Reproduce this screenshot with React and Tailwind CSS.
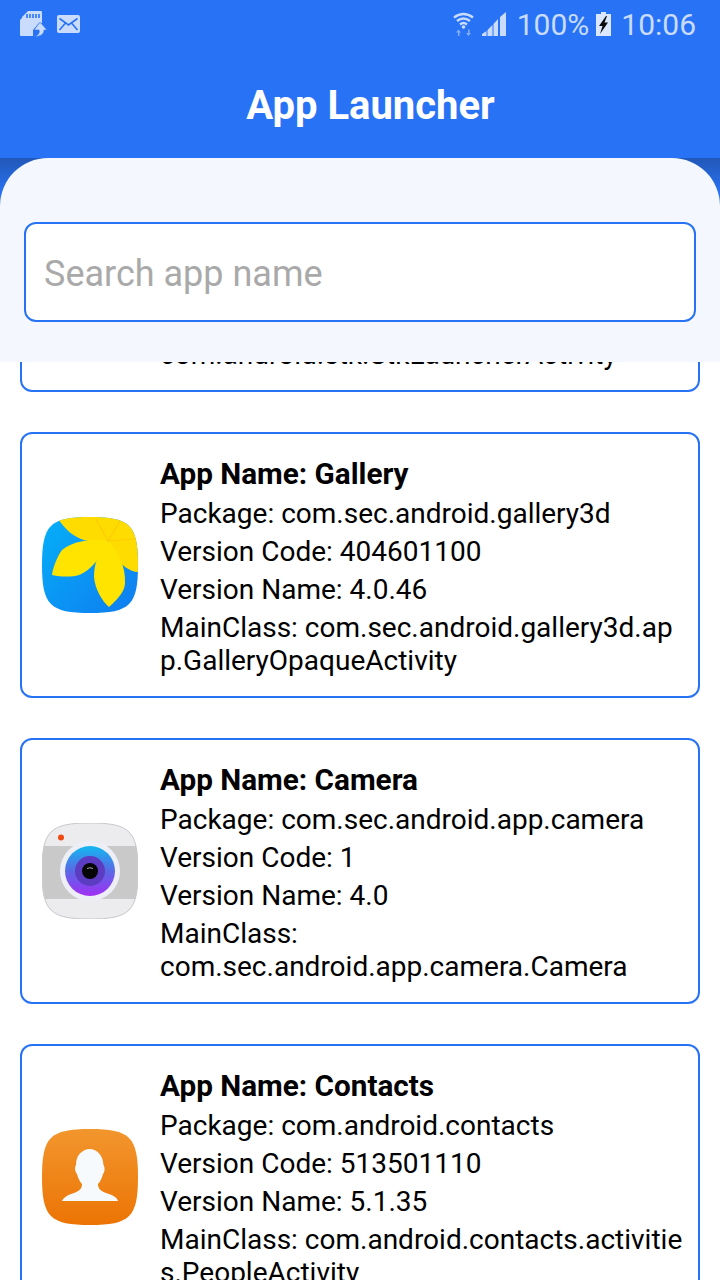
const apps = [
  {
    name: "Gallery",
    pkg: "com.sec.android.gallery3d",
    code: "404601100",
    version: "4.0.46",
    main: "com.sec.android.gallery3d.app.GalleryOpaqueActivity",
    wrap: "break-all",
    icon: <GalleryIcon />,
  },
  {
    name: "Camera",
    pkg: "com.sec.android.app.camera",
    code: "1",
    version: "4.0",
    main: "com.sec.android.app.camera.Camera",
    wrap: "break-normal",
    icon: <CameraIcon />,
  },
  {
    name: "Contacts",
    pkg: "com.android.contacts",
    code: "513501110",
    version: "5.1.35",
    main: "com.android.contacts.activities.PeopleActivity",
    wrap: "break-all",
    icon: <ContactsIcon />,
  },
];

const SQUIRCLE = "M48 0C88 0 96 8 96 48C96 88 88 96 48 96C8 96 0 88 0 48C0 8 8 0 48 0Z";

function GalleryIcon() {
  return (
    <svg viewBox="0 0 96 96" className="w-24 h-24 shrink-0 mb-1">
      <defs>
        <linearGradient id="gal" x1="0" y1="0" x2="1" y2="1">
          <stop offset="0" stopColor="#05b0f8" />
          <stop offset="1" stopColor="#0f7cf0" />
        </linearGradient>
        <clipPath id="galClip">
          <path d={SQUIRCLE} />
        </clipPath>
      </defs>
      <path d={SQUIRCLE} fill="url(#gal)" />
      <g clipPath="url(#galClip)">
        <path d="M15 0H96V55C88 55 79 48 74 40L66 24C56 25 46 25 39 22C29 18 21 10 15 0Z" fill="#ffdc00" />
        <path d="M66 24C50 21 30 24 20 33C15 40 11 50 10 58C20 60 30 60 37 58C48 54 60 40 66 24Z" fill="#ffe400" />
        <path d="M66 24C56 34 52 48 52 60C53 72 60 84 67 90C76 82 83 74 83 66C84 50 76 34 66 24Z" fill="#ffe400" />
        <path d="M66 24L54 2M66 24L78 4M66 24L94 22" stroke="#fccb00" strokeWidth="1.2" fill="none" />
      </g>
    </svg>
  );
}

function CameraIcon() {
  return (
    <svg viewBox="0 0 96 96" className="w-24 h-24 shrink-0 mb-1">
      <defs>
        <linearGradient id="lens" x1="0" y1="0" x2="0" y2="1">
          <stop offset="0" stopColor="#12b8f0" />
          <stop offset="0.5" stopColor="#5a68e6" />
          <stop offset="1" stopColor="#a030f4" />
        </linearGradient>
        <clipPath id="camClip">
          <path d={SQUIRCLE} />
        </clipPath>
      </defs>
      <path d={SQUIRCLE} fill="#ecebee" stroke="#c8c8ca" strokeWidth="1" />
      <rect x="0" y="23" width="96" height="53" fill="#c9c9c9" clipPath="url(#camClip)" />
      <circle cx="19" cy="14.5" r="3" fill="#ee4a12" />
      <circle cx="48" cy="48" r="30" fill="#eeeef6" />
      <circle cx="48" cy="48" r="25" fill="url(#lens)" />
      <circle cx="48" cy="48" r="15" fill="#5c3cc0" />
      <circle cx="48" cy="48" r="8" fill="#050505" />
      <path d="M45 45.5Q48 44 51 45.5" stroke="#a0a0a0" strokeWidth="1" fill="none" />
    </svg>
  );
}

function ContactsIcon() {
  return (
    <svg viewBox="0 0 96 96" className="w-24 h-24 shrink-0 mb-1">
      <defs>
        <linearGradient id="con" x1="0" y1="0" x2="0" y2="1">
          <stop offset="0" stopColor="#f2962e" />
          <stop offset="1" stopColor="#ec7404" />
        </linearGradient>
      </defs>
      <path d={SQUIRCLE} fill="url(#con)" />
      <path
        d="M47 20C56 20 61 27 61.5 36C63 38 63 43 61 45C60 49 58 53 56 55C56 60 59 62 64 64C70 66 75 68 76 72H20C22 68 26 66 32 64C37 62 40 60 40 55C38 53 36 49 35 45C33 43 32.5 38 34 36C34 27 39 21 47 20Z"
        fill="#f6fafc"
      />
    </svg>
  );
}

function SdIcon() {
  return (
    <svg viewBox="0 0 28 28" className="w-7 h-7 text-[#c9dcfe]">
      <path d="M8 1H21Q22 1 22 2V13L19 13L13 20V26H1Q0 26 0 25V10L2 8V7Z" fill="currentColor" />
      <path d="M7 4v4M10 4v4M13 4v4M16 4v4M19 4v4" stroke="#2873f5" strokeWidth="1.6" />
      <path d="M20 12L27 20H24C24 24 21 26 15 27C18 25 20 23 19 20H14Z" fill="currentColor" stroke="#2873f5" strokeWidth="0.6" />
    </svg>
  );
}

function MailIcon() {
  return (
    <svg viewBox="0 0 23 18" className="w-[23px] h-[18px] text-[#c9dcfe]">
      <rect width="23" height="18" rx="2" fill="currentColor" />
      <path d="M2.5 3.5L11.5 10L20.5 3.5M2.5 15L8.5 8M20.5 15L14.5 8" stroke="#2873f5" strokeWidth="1.6" fill="none" />
    </svg>
  );
}

function WifiIcon() {
  return (
    <svg viewBox="0 0 21 24" className="w-[21px] h-6 text-[#c9dcfe]">
      <path d="M1 5.5Q10.5 -1.5 20 5.5M4 9Q10.5 4 17 9M7 12.5Q10.5 9.5 14 12.5" stroke="currentColor" strokeWidth="2.4" fill="none" />
      <circle cx="10.5" cy="15" r="1.8" fill="currentColor" />
      <path d="M5 24V20.5H3L5.5 17.5L8 20.5H6.5V24Z" fill="#83aef7" />
      <path d="M15 17.5V21H13L15.5 24L18 21H16.5V17.5Z" fill="#83aef7" />
    </svg>
  );
}

function SignalIcon() {
  return (
    <svg viewBox="0 0 24 24" className="w-6 h-6 text-[#c9dcfe]">
      <path d="M0 24V22L4.5 19V24ZM5.5 24V18L10.5 13V24ZM11.5 24V12L16 7V24ZM18 24V5L24 0V24Z" fill="currentColor" />
    </svg>
  );
}

function BatteryIcon() {
  return (
    <svg viewBox="0 0 15 24" className="w-[15px] h-6 text-[#dbe7fe]">
      <path d="M5 0H10V2H15V24H0V2H5Z" fill="currentColor" />
      <path d="M10 4L3 14H6.5L4 22L12 10.5H8.5L11 4Z" fill="#0c0c0c" />
    </svg>
  );
}

function Line({ children, className = "" }) {
  return <p className={`leading-[33px] mb-[5px] last:mb-0 ${className}`}>{children}</p>;
}

function AppCard({ app, className = "" }) {
  return (
    <div className={`flex items-center gap-[22px] border-2 border-[#2873f5] rounded-xl bg-white pl-5 pr-3 pt-[22px] pb-[19px] ${className}`}>
      {app.icon}
      <div className="flex-1 min-w-0 text-[28px] text-black">
        <Line className="font-bold text-[29.7px] leading-[36px]">App Name: {app.name}</Line>
        <Line>Package: {app.pkg}</Line>
        <Line>Version Code: {app.code}</Line>
        <Line>Version Name: {app.version}</Line>
        <Line className={app.wrap}>MainClass: {app.main}</Line>
      </div>
    </div>
  );
}

export default function App() {
  return (
    <div className="w-[720px] h-[1280px] overflow-hidden flex flex-col bg-white font-['Roboto',sans-serif]">
      <div className="h-[158px] shrink-0 bg-[#2873f5] flex flex-col">
        <div className="h-12 flex items-center justify-between pl-5 pr-6 text-[30px] text-[#c9dcfe]">
          <div className="flex items-center gap-[9px]">
            <SdIcon />
            <MailIcon />
          </div>
          <div className="flex items-center">
            <WifiIcon />
            <div className="ml-2"><SignalIcon /></div>
            <span className="ml-[11px]">100%</span>
            <div className="ml-[7px]"><BatteryIcon /></div>
            <span className="ml-[10px]">10:06</span>
          </div>
        </div>
        <h1 className="text-center text-white font-bold text-[40px] leading-[44px] mt-9 pl-[21px]">App Launcher</h1>
      </div>

      <div className="h-[204px] shrink-0 bg-gradient-to-b from-[#2258b8] to-[#2873f5] to-[18%]">
        <div className="h-full bg-[#f4f7fe] rounded-t-[48px] px-6 pt-16">
          <input
            readOnly
            placeholder="Search app name"
            className="w-full h-[100px] bg-white border-2 border-[#2873f5] rounded-xl px-[18px] pt-1 text-[36px] outline-none placeholder:text-[#a9a9a9] font-['Roboto',sans-serif]"
          />
        </div>
      </div>

      <div className="flex-1 overflow-hidden px-5">
        <AppCard
          className="-mt-[236px] mb-10"
          app={{
            name: "STK",
            pkg: "com.android.stk",
            code: "1",
            version: "1.0",
            main: "com.android.stk.StkLauncherActivity",
            wrap: "break-normal",
            icon: <div className="w-24 h-24 shrink-0" />,
          }}
        />
        {apps.map((app) => (
          <AppCard key={app.name} app={app} className="mb-10" />
        ))}
      </div>
    </div>
  );
}
